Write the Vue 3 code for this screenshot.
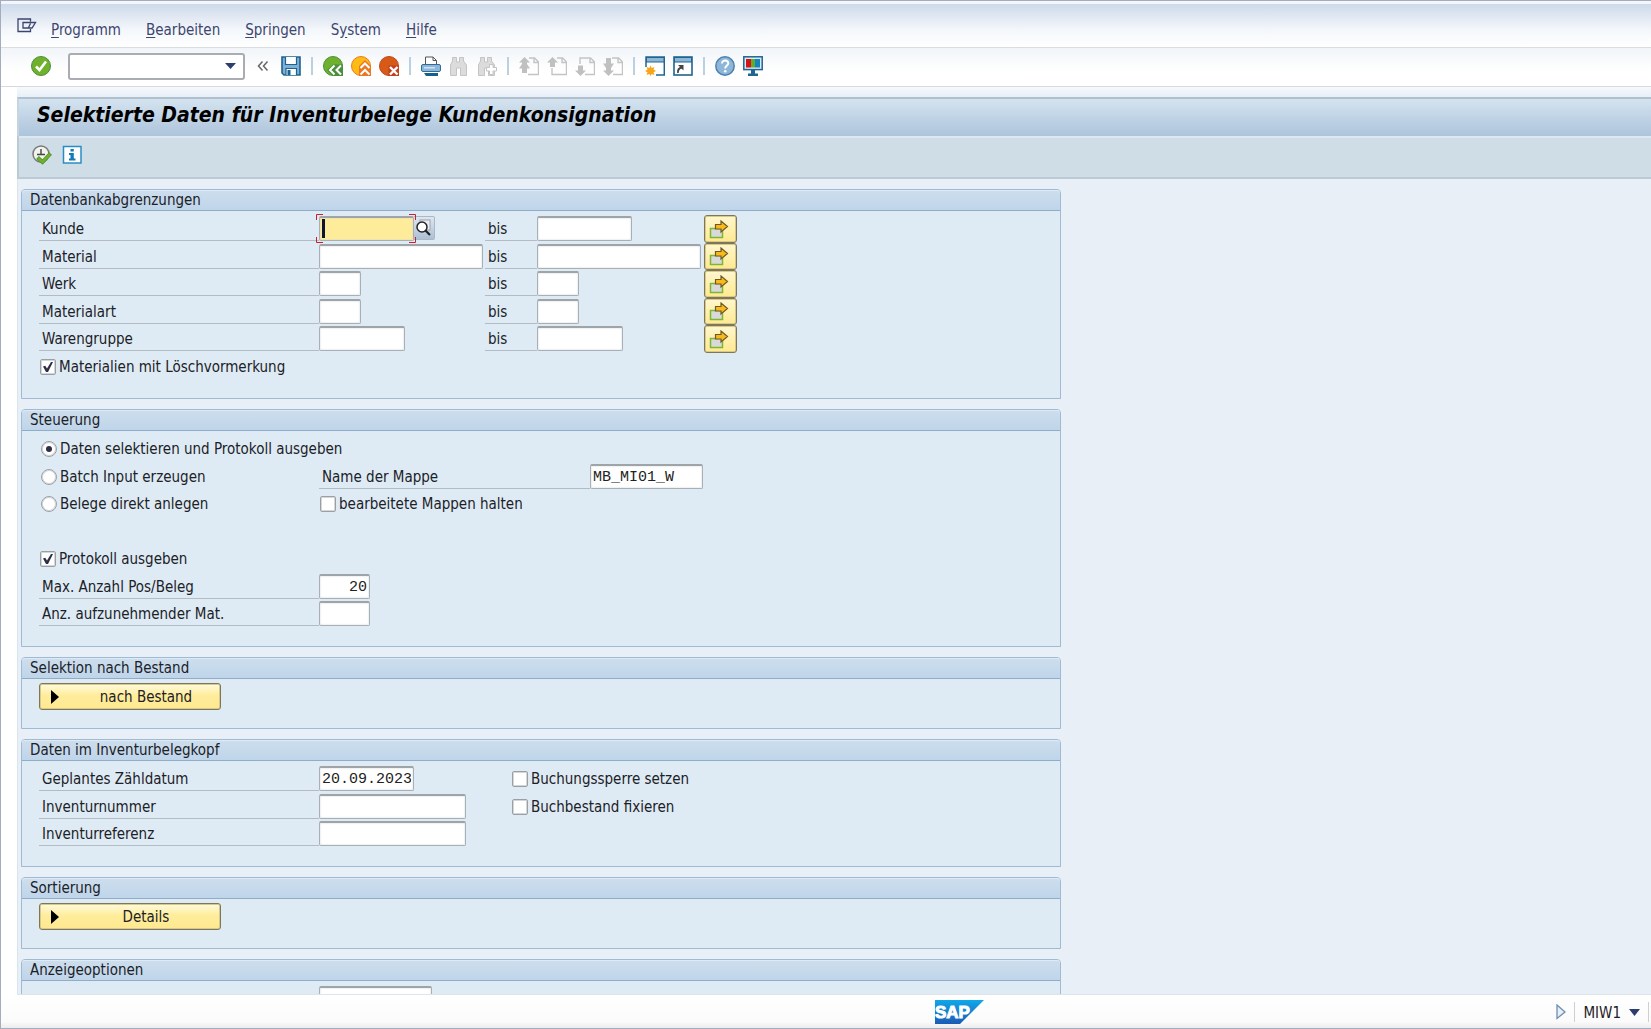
<script setup>
import { ref } from 'vue'

const menus = [
  { pre: '', key: 'P', post: 'rogramm' },
  { pre: '', key: 'B', post: 'earbeiten' },
  { pre: '', key: 'S', post: 'pringen' },
  { pre: 'S', key: 'y', post: 'stem' },
  { pre: '', key: 'H', post: 'ilfe' }
]

const ranges = [
  { id: 'kunde', label: 'Kunde', size: 'w-date', focus: true },
  { id: 'material', label: 'Material', size: 'w-material' },
  { id: 'werk', label: 'Werk', size: 'w-plant' },
  { id: 'materialart', label: 'Materialart', size: 'w-plant' },
  { id: 'warengruppe', label: 'Warengruppe', size: 'w-group' }
]

const withDeleted = ref(true)
const mode = ref('protokoll')
const sessionName = ref('MB_MI01_W')
const keepSessions = ref(false)
const printLog = ref(true)
const maxItems = ref('20')
const countItems = ref('')
const countDate = ref('20.09.2023')
const inventoryNo = ref('')
const inventoryRef = ref('')
const postingBlock = ref(false)
const freezeStock = ref(false)
</script>

<template>
  <div class="window">
    <nav class="menubar" aria-label="Menü">
      <button class="icon-btn menu-icon" aria-label="Systemmenü">
        <svg width="20" height="16" viewBox="0 0 20 16" fill="none" stroke="#3b4570" stroke-width="1.300">
          <path d="M13.500 3.500V1H1V13.500H13.500V11M6 4.500H18.500L15 10H6ZM13.500 5.500L11.500 9.500" />
        </svg>
      </button>
      <a v-for="m in menus" :key="m.key" href="#" class="menu">{{ m.pre }}<u>{{ m.key }}</u>{{ m.post }}</a>
    </nav>

    <div class="toolbar">
      <button class="icon-btn ok" aria-label="Enter">
        <svg width="20" height="20" viewBox="0 0 20 20">
          <circle cx="10" cy="10" r="9.500" fill="#6fb02c" stroke="#4b8f3e" />
          <path d="M5 10.500L8.500 14L15 5.500" fill="none" stroke="#fff" stroke-width="2.600" />
        </svg>
      </button>
      <div class="command">
        <input type="text" aria-label="Transaktionscode" />
        <svg width="11" height="6" viewBox="0 0 11 6"><path d="M0 0H11L5.500 6Z" fill="#2c3e70" /></svg>
      </div>
      <button class="icon-btn collapse" aria-label="Ausblenden">
        <svg width="12" height="10" viewBox="0 0 12 10" fill="none" stroke="#666" stroke-width="1.500">
          <path d="M5.500 .5L1.500 5L5.500 9.500M10.500 .5L6.500 5L10.500 9.500" />
        </svg>
      </button>
      <div class="tools">
        <button class="icon-btn" aria-label="Sichern">
          <svg width="20" height="20" viewBox="0 0 20 20">
            <path d="M1 1H19V19H3L1 17Z" fill="#7fafd4" stroke="#1d638f" stroke-width="1.600" />
            <path d="M4.500 1V8.500H15.500V1" fill="#fff" stroke="#1d638f" stroke-width="1.200" />
            <path d="M5 19V12.500H15.500V19" fill="#fff" stroke="#1d638f" stroke-width="1.200" />
            <rect x="6.500" y="14" width="3" height="5" fill="#1d638f" />
          </svg>
        </button>
      </div>
      <i class="sep"></i>
      <div class="tools">
        <button class="icon-btn" aria-label="Zurück">
          <svg width="20" height="20" viewBox="0 0 20 20">
            <circle cx="10" cy="10" r="9.500" fill="#6fb02c" stroke="#4b8f3e" />
            <path d="M4 14L10 8.500H20V20H10Z" fill="#4b8f3e" />
            <path d="M11.500 9.500L7 14L11.500 18.500M18 9.500L13.500 14L18 18.500" fill="none" stroke="#fff" stroke-width="2" />
          </svg>
        </button>
        <button class="icon-btn" aria-label="Beenden">
          <svg width="20" height="20" viewBox="0 0 20 20">
            <circle cx="10" cy="10" r="9.500" fill="#fdbb13" stroke="#e87a22" />
            <path d="M8 20V10L14 4L20 10V20Z" fill="#ea7722" />
            <path d="M9.500 12L14 7.500L18.500 12M9.500 18.500L14 14L18.500 18.500" fill="none" stroke="#fff" stroke-width="2" />
          </svg>
        </button>
        <button class="icon-btn" aria-label="Abbrechen">
          <svg width="20" height="20" viewBox="0 0 20 20">
            <circle cx="10" cy="10" r="9.500" fill="#d95a16" stroke="#b84a22" />
            <rect x="9.500" y="9.500" width="10.500" height="10.500" fill="#c2401c" />
            <path d="M11 11L18.500 18.500M18.500 11L11 18.500" fill="none" stroke="#fff" stroke-width="2.400" />
          </svg>
        </button>
      </div>
      <i class="sep"></i>
      <div class="tools">
        <button class="icon-btn" aria-label="Drucken">
          <svg width="20" height="20" viewBox="0 0 20 20">
            <path d="M4.500 9V1H12L15.500 4.500V9" fill="#fff" stroke="#555" />
            <path d="M12 1V4.500H15.500" fill="none" stroke="#555" />
            <rect x=".5" y="8.500" width="19" height="7" rx="1.500" fill="#8db6d8" stroke="#2f6d98" />
            <rect x="3" y="11" width="11" height="1.500" fill="#cfe4f3" />
            <path d="M3 17H17V20H5Z" fill="#155f8f" />
          </svg>
        </button>
        <button class="icon-btn" aria-label="Suchen">
          <svg width="20" height="20" viewBox="0 0 20 20" fill="#dcdcdc" stroke="#c4c4c4">
            <path d="M1.500 19.500V9L3.500 5V1.500H7.500V6H10.500V1.500H14.500V5L17.500 9V19.500H11.500V12H7.500V19.500Z" />
          </svg>
        </button>
        <button class="icon-btn" aria-label="Weitersuchen">
          <svg width="20" height="20" viewBox="0 0 20 20" fill="#dcdcdc" stroke="#c4c4c4">
            <path d="M1.500 19.500V9L3.500 5V1.500H7.500V6H10.500V1.500H14.500V5L17.500 9V19.500H11.500V12H7.500V19.500Z" />
            <path d="M12.500 8.500H16V11.500H19.500V15H16V18.500H12.500V15H9.500V11.500H12.500Z" fill="#fff" />
          </svg>
        </button>
      </div>
      <i class="sep"></i>
      <div class="tools">
        <button class="icon-btn" aria-label="Erste Seite">
          <svg width="20" height="20" viewBox="0 0 20 20" fill="none" stroke="#c4c4c4">
            <path d="M10 2H15.500L19.500 6V18.500H9M15 2V6.500H19.500" stroke-width="1.400" />
            <path d="M5.500 1L11 6.500H8V8L11 12.500H8V17H3V12.500H0L3 8V6.500H0Z" fill="#c0c0c0" stroke="none" />
          </svg>
        </button>
        <button class="icon-btn" aria-label="Vorige Seite">
          <svg width="20" height="20" viewBox="0 0 20 20" fill="none" stroke="#c4c4c4">
            <path d="M10 2H15.500L19.500 6V18.500H5V12M15 2V6.500H19.500" stroke-width="1.400" />
            <path d="M5.500 1L11 6.500H8V11H3V6.500H0Z" fill="#c0c0c0" stroke="none" />
          </svg>
        </button>
        <button class="icon-btn" aria-label="Nächste Seite">
          <svg width="20" height="20" viewBox="0 0 20 20" fill="none" stroke="#c4c4c4">
            <path d="M5 8V2H15.500L19.500 6V18.500H10M15 2V6.500H19.500" stroke-width="1.400" />
            <path d="M5.500 20L0 14.500H3V9.500H8V14.500H11Z" fill="#c0c0c0" stroke="none" />
          </svg>
        </button>
        <button class="icon-btn" aria-label="Letzte Seite">
          <svg width="20" height="20" viewBox="0 0 20 20" fill="none" stroke="#c4c4c4">
            <path d="M9 2H15.500L19.500 6V18.500H10M15 2V6.500H19.500" stroke-width="1.400" />
            <path d="M5.500 20L0 14.500H3V12L0 7.500H3V2H8V7.500H11L8 12V14.500H11Z" fill="#c0c0c0" stroke="none" />
          </svg>
        </button>
      </div>
      <i class="sep"></i>
      <div class="tools">
        <button class="icon-btn" aria-label="Neuer Modus">
          <svg width="20" height="20" viewBox="0 0 20 20">
            <path d="M1 11V1H19.300V19H11" fill="#fff" stroke="#20658f" stroke-width="1.500" />
            <rect x="1.500" y="1.500" width="17.500" height="4.500" fill="#8db6d8" stroke="#20658f" />
            <path d="M5.500 9.500L6.700 12L9.500 11L8.500 13.500L11 15L8.500 16.200L9.500 19L6.700 18L5.500 20L4.300 18L1.500 19L2.500 16.200L0 15L2.500 13.500L1.500 11L4.300 12Z" fill="#f9a51a" />
          </svg>
        </button>
        <button class="icon-btn" aria-label="Verknüpfung">
          <svg width="20" height="20" viewBox="0 0 20 20">
            <rect x="1" y="1" width="18" height="18" fill="#fff" stroke="#20658f" stroke-width="1.600" />
            <rect x="1.500" y="1.500" width="17" height="4.500" fill="#8db6d8" stroke="#20658f" />
            <path d="M5 17C4.500 13.500 6 12 9 11.500" fill="none" stroke="#444" stroke-width="1.800" />
            <path d="M5 9H10.500V14.500Z" fill="#444" />
          </svg>
        </button>
      </div>
      <i class="sep"></i>
      <div class="tools">
        <button class="icon-btn" aria-label="Hilfe">
          <svg width="20" height="20" viewBox="0 0 20 20">
            <circle cx="10" cy="10" r="9.200" fill="#8db6d8" stroke="#4c82b0" stroke-width="1.500" />
            <path d="M7 7.500C7 3.500 13.500 3.800 13.300 7.500C13.200 9.500 10.200 9.800 10.200 12.500" fill="none" stroke="#fff" stroke-width="2" />
            <circle cx="10.200" cy="15.300" r="1.300" fill="#fff" />
          </svg>
        </button>
        <button class="icon-btn" aria-label="Lokales Layout anpassen">
          <svg width="20" height="20" viewBox="0 0 20 20">
            <rect x=".8" y=".8" width="18.400" height="12.800" fill="#dcebf5" stroke="#20658f" stroke-width="1.500" />
            <rect x="3" y="3" width="5" height="8.500" fill="#d2141c" />
            <rect x="8" y="3" width="4" height="8.500" fill="#5fae2a" />
            <rect x="12" y="3" width="5" height="8.500" fill="#1682c4" />
            <path d="M8 14H12V17.500H15V20H5V17.500H8Z" fill="#20658f" />
          </svg>
        </button>
      </div>
    </div>

    <main class="screen">
      <header class="titlebar"><h1>Selektierte Daten für Inventurbelege Kundenkonsignation</h1></header>
      <div class="appbar">
        <button class="icon-btn" aria-label="Ausführen">
          <svg width="20" height="20" viewBox="0 0 20 20">
            <circle cx="9" cy="9" r="8" fill="#f2f2ee" stroke="#7a7a7a" stroke-width="1.500" />
            <path d="M9 4V10M5 9.500H13" fill="none" stroke="#444" stroke-width="1.400" />
            <path d="M5.500 12.500L10.500 17L18.500 8.500" fill="none" stroke="#4f8f2a" stroke-width="4" />
            <path d="M6 13L10.500 17L18 9" fill="none" stroke="#6fb02c" stroke-width="2.600" />
          </svg>
        </button>
        <button class="icon-btn" aria-label="Information">
          <svg width="20" height="20" viewBox="0 0 20 20">
            <rect x="1.500" y="1.500" width="17.500" height="16.500" fill="#fff" stroke="#2a8cc4" stroke-width="1.500" />
            <path d="M8.500 4H11.800V6.500H8.500ZM7 8H11.800V13.500H13.500V15.500H7V13.500H8.500V10H7Z" fill="#127ab8" />
          </svg>
        </button>
      </div>

      <form class="content" @submit.prevent>
        <section class="group">
          <h2>Datenbankabgrenzungen</h2>
          <div class="rows rows-range">
            <template v-for="r in ranges" :key="r.id">
              <label class="label" :for="r.id + '-von'">{{ r.label }}</label>
              <div class="cell">
                <div v-if="r.focus" class="focus-field">
                  <input :id="r.id + '-von'" type="text" class="field focused" :class="r.size" />
                  <i class="caret"></i>
                  <svg class="corners" width="100" height="29" viewBox="0 0 100 29" fill="none" stroke="#c8202c">
                    <path d="M.5 6V.5H7M93 .5H99.500V6M99.500 23V28.500H93M7 28.500H.5V23" />
                  </svg>
                </div>
                <input v-else :id="r.id + '-von'" type="text" class="field" :class="r.size" />
                <button v-if="r.focus" type="button" class="search-help" aria-label="Suchhilfe">
                  <svg width="17" height="18" viewBox="0 0 17 18">
                    <rect x="5" y="1" width="10" height="10" fill="#e9edf2" stroke="#9aa3af" />
                    <circle cx="7" cy="8" r="5" fill="#fff" stroke="#222" stroke-width="1.500" />
                    <path d="M10.500 11.500L15 16" stroke="#222" stroke-width="2.200" />
                  </svg>
                </button>
              </div>
              <label class="label" :for="r.id + '-bis'">bis</label>
              <div class="cell"><input :id="r.id + '-bis'" type="text" class="field" :class="r.size" /></div>
              <button type="button" class="sap-button multi" :aria-label="'Mehrfachselektion ' + r.label">
                <svg width="20" height="19" viewBox="0 0 20 19">
                  <rect x="1.500" y="8.500" width="12" height="9" fill="#d9d9d9" stroke="#7db832" stroke-width="1.500" />
                  <path d="M6.500 4.500H12V1L18.500 6.500L12 12V9H6.500Z" fill="#fbb81a" stroke="#6b5a2a" stroke-width="1.200" />
                </svg>
              </button>
            </template>
            <label class="choice wide"><input v-model="withDeleted" type="checkbox" />Materialien mit Löschvormerkung</label>
          </div>
        </section>

        <section class="group">
          <h2>Steuerung</h2>
          <div class="rows rows-control">
            <label class="choice radio wide"><input v-model="mode" type="radio" name="mode" value="protokoll" />Daten selektieren und Protokoll ausgeben</label>
            <label class="choice radio"><input v-model="mode" type="radio" name="mode" value="batch" />Batch Input erzeugen</label>
            <label class="label" for="mappe">Name der Mappe</label>
            <div class="cell"><input id="mappe" v-model="sessionName" type="text" class="field w-session" /></div>
            <label class="choice radio"><input v-model="mode" type="radio" name="mode" value="direkt" />Belege direkt anlegen</label>
            <label class="choice rest"><input v-model="keepSessions" type="checkbox" />bearbeitete Mappen halten</label>
            <div class="wide"></div>
            <label class="choice wide"><input v-model="printLog" type="checkbox" />Protokoll ausgeben</label>
            <label class="label" for="maxpos">Max. Anzahl Pos/Beleg</label>
            <div class="cell rest"><input id="maxpos" v-model="maxItems" type="text" class="field w-count" /></div>
            <label class="label" for="anzahl">Anz. aufzunehmender Mat.</label>
            <div class="cell rest"><input id="anzahl" v-model="countItems" type="text" class="field w-count" /></div>
          </div>
        </section>

        <section class="group">
          <h2>Selektion nach Bestand</h2>
          <div class="rows rows-button">
            <button type="button" class="sap-button expand">
              <svg width="8" height="14" viewBox="0 0 8 14"><path d="M0 0L8 7L0 14Z" /></svg>
              <span>nach Bestand</span>
            </button>
          </div>
        </section>

        <section class="group">
          <h2>Daten im Inventurbelegkopf</h2>
          <div class="rows rows-head">
            <label class="label" for="datum">Geplantes Zähldatum</label>
            <div class="cell"><input id="datum" v-model="countDate" type="text" class="field w-date" /></div>
            <label class="choice"><input v-model="postingBlock" type="checkbox" />Buchungssperre setzen</label>
            <label class="label" for="invnr">Inventurnummer</label>
            <div class="cell"><input id="invnr" v-model="inventoryNo" type="text" class="field w-inventory" /></div>
            <label class="choice"><input v-model="freezeStock" type="checkbox" />Buchbestand fixieren</label>
            <label class="label" for="invref">Inventurreferenz</label>
            <div class="cell"><input id="invref" v-model="inventoryRef" type="text" class="field w-inventory" /></div>
          </div>
        </section>

        <section class="group">
          <h2>Sortierung</h2>
          <div class="rows rows-button">
            <button type="button" class="sap-button expand">
              <svg width="8" height="14" viewBox="0 0 8 14"><path d="M0 0L8 7L0 14Z" /></svg>
              <span>Details</span>
            </button>
          </div>
        </section>

        <section class="group">
          <h2>Anzeigeoptionen</h2>
          <div class="rows rows-head">
            <span></span>
            <div class="cell"><input type="text" class="field w-session" aria-label="Anzeigevariante" /></div>
          </div>
        </section>
      </form>
    </main>

    <footer class="statusbar">
      <span></span>
      <svg class="logo" width="49" height="24" viewBox="0 0 49 24" role="img" aria-label="SAP">
        <defs>
          <linearGradient id="sap-blue" x1="0" y1="0" x2="0" y2="1">
            <stop offset="0" stop-color="#0fa8e8" />
            <stop offset="1" stop-color="#1b5bb5" />
          </linearGradient>
        </defs>
        <path d="M0 0H49L25 24H0Z" fill="url(#sap-blue)" />
        <text x="0" y="18" font-family="Liberation Sans, sans-serif" font-weight="700" font-size="17" fill="#fff" stroke="#fff" stroke-width="1">SAP</text>
      </svg>
      <div class="status-right">
        <button class="icon-btn" aria-label="Statusfeld einblenden">
          <svg width="10" height="16" viewBox="0 0 10 16"><path d="M1 1V14.500L9 8Z" fill="#e6eff7" stroke="#6f8fae" stroke-width="1.300" /></svg>
        </button>
        <i class="divider"></i>
        <button class="icon-btn session">
          <span>MIW1</span>
          <svg width="11" height="7" viewBox="0 0 11 7"><path d="M0 0H11L5.500 7Z" fill="#2c3e70" /></svg>
        </button>
        <i class="divider"></i>
      </div>
    </footer>
  </div>
</template>

<style>
body {
  margin: 0;
}
</style>

<style scoped>
.window,
.window * {
  box-sizing: border-box;
}

.window {
  display: flex;
  flex-direction: column;
  height: 100vh;
  overflow: hidden;
  background: #fff;
  border: solid #a3adbd;
  border-width: 1px 0 1px 1px;
  font: 15px/20px "DejaVu Sans Condensed", "DejaVu Sans", sans-serif;
  font-stretch: condensed;
  color: #1c2127;
}

.icon-btn {
  display: flex;
  flex: none;
  align-items: center;
  justify-content: center;
  padding: 0;
  border: 0;
  background: none;
  color: inherit;
  font: inherit;
}

.menubar {
  display: flex;
  flex: none;
  align-items: center;
  gap: 25px;
  height: 47px;
  padding: 8px 16px 0;
  border-top: 3px solid #f3f7fd;
  border-bottom: 1px solid #d8dde2;
  background: linear-gradient(#cedaea, #f4f7fb 60%, #fff);
}

.menu-icon {
  margin: 0 -11px 8px 0;
}

.menu {
  color: #3c4670;
  text-decoration: none;
}

.menu u {
  text-underline-offset: 2px;
}

.toolbar {
  display: flex;
  flex: none;
  align-items: center;
  height: 39px;
  padding: 0 0 2px 30px;
  border-bottom: 1px solid #d4dade;
  background: linear-gradient(#f1f5f9, #fff 60%);
}

.command {
  display: flex;
  align-items: center;
  width: 177px;
  height: 27px;
  margin: 0 12px 0 17px;
  padding-right: 7px;
  border: 2px solid #a9adb3;
  border-radius: 3px;
  background: #fff;
}

.command input {
  flex: 1;
  min-width: 0;
  border: 0;
  outline: 0;
  background: none;
  font: inherit;
}

.collapse {
  margin-right: 12px;
}

.tools {
  display: flex;
  gap: 8px;
}

.sep {
  width: 2px;
  height: 18px;
  margin: 0 10px;
  background: #bcd0e4;
}

.screen {
  display: flex;
  flex: 1;
  flex-direction: column;
  min-height: 0;
  margin: 0 0 0 16px;
  padding-top: 10px;
  background: linear-gradient(#f6f8fc, #e8eff7 10px);
}

.titlebar {
  flex: none;
  height: 39px;
  padding: 4px 0 0 18px;
  border-top: 2px solid #b1c0cf;
  border-left: 2px solid #c6d4e0;
  background: linear-gradient(#d4e3ef, #adc4dc);
}

.titlebar h1 {
  margin: 0;
  color: #000;
  font-size: 21px;
  font-style: italic;
  font-weight: 700;
  line-height: 24px;
  white-space: nowrap;
}

.appbar {
  display: flex;
  flex: none;
  gap: 10px;
  align-items: center;
  height: 43px;
  padding: 0 0 4px 13px;
  border: solid #bccad6;
  border-width: 0 0 2px 2px;
  box-shadow: inset 0 2px #dde8f1;
  background: #cfdde7;
}

.content {
  display: flex;
  flex: 1;
  flex-direction: column;
  gap: 10px;
  min-height: 0;
  overflow: hidden;
  padding: 10px 4px 0 3px;
  border-left: 1px solid #dbe4ee;
  border-bottom: 1px solid #dde4ea;
}

.group {
  flex: none;
  width: 100%;
  max-width: 1040px;
  border: 1px solid #9fbad3;
  border-radius: 4px 4px 0 0;
  background: #deebf4;
}

.group h2 {
  height: 21px;
  margin: 0;
  padding-left: 8px;
  border-bottom: 1px solid #8fadc9;
  border-radius: 3px 3px 0 0;
  box-shadow: inset 0 1px #dfeaf4;
  background: linear-gradient(#cddeed, #bfd5ea);
  font-size: 15px;
  font-weight: 400;
  line-height: 20px;
}

.rows {
  display: grid;
  grid-auto-rows: 28px 27px;
  padding: 4px 17px 18px;
}

.rows-range {
  grid-template-columns: 280px 166px 52px 167px 33px;
}

.rows-control {
  grid-template-columns: 280px 271px 1fr;
}

.rows-head {
  grid-template-columns: 280px 192px 1fr;
}

.rows-button {
  grid-auto-rows: 27px;
}

.wide {
  grid-column: 1 / -1;
}

.rest {
  grid-column: 2 / -1;
}

.label {
  height: 26px;
  padding-left: 3px;
  border-bottom: 1px solid #b3bcc2;
  line-height: 28px;
  white-space: nowrap;
}

.cell {
  display: flex;
  align-items: flex-start;
  padding-top: 1px;
}

.field {
  display: block;
  height: 25px;
  padding: 0 2px;
  border: 1px solid #a9b0b5;
  border-top: 2px solid #9fa4a8;
  border-radius: 2px;
  outline: 0;
  box-shadow: inset 0 0 2px #c9cdd0;
  background: #fff;
  color: #222;
  font: 15px/20px "Liberation Mono", monospace;
}

.w-plant {
  width: 42px;
}

.w-count {
  width: 51px;
  text-align: right;
}

.w-group {
  width: 86px;
}

.w-date {
  width: 95px;
}

.w-session {
  width: 113px;
}

.w-inventory {
  width: 147px;
}

.w-material {
  width: 164px;
}

.focus-field {
  position: relative;
}

.focused {
  background: #ffec9b;
}

.caret {
  position: absolute;
  top: 3px;
  left: 3px;
  width: 3px;
  height: 19px;
  background: #0e1530;
}

.corners {
  position: absolute;
  top: -2px;
  left: -3px;
  pointer-events: none;
}

.search-help {
  display: flex;
  align-items: center;
  width: 21px;
  height: 24px;
  padding: 0 0 0 1px;
  border: 1px solid #adb8c5;
  border-left: 0;
  border-radius: 0 2px 2px 0;
  background: linear-gradient(#dfe6ee, #adbfd6);
}

.sap-button {
  border: 1px solid #7c7759;
  border-radius: 3px;
  box-shadow: inset 0 0 0 1px #d8c98a;
  background: linear-gradient(#fff7cf, #ffe98f);
  color: #1c2127;
  font: inherit;
}

.multi {
  display: flex;
  align-items: center;
  justify-content: center;
  padding: 0 4px 0 0;
}

.expand {
  display: flex;
  align-items: center;
  width: 182px;
  padding: 0 1px 0 11px;
  background: linear-gradient(#fffbe0, #ffed9c 45%, #ffe890);
}

.expand span {
  flex: 1;
  padding-left: 14px;
  text-align: center;
}

.choice {
  display: flex;
  align-items: center;
  gap: 3px;
  height: 28px;
  padding-left: 1px;
  white-space: nowrap;
}

.radio {
  padding-left: 2px;
}

.choice input {
  display: grid;
  place-items: center;
  width: 16px;
  height: 16px;
  margin: 0;
  appearance: none;
  border: 1px solid #9ba0a5;
  border-radius: 2px;
  box-shadow: inset 0 0 0 1px #d4d7da;
  background: #fff;
}

.choice input[type="radio"] {
  border-radius: 50%;
}

.choice input[type="radio"]:checked::before {
  content: "";
  width: 6px;
  height: 6px;
  border-radius: 50%;
  background: #2d3045;
}

.choice input[type="checkbox"]:checked::before {
  content: "";
  width: 10px;
  height: 10px;
  background: #2d3045;
  clip-path: polygon(0 45%, 22% 38%, 40% 65%, 80% 0, 100% 0, 50% 100%, 30% 100%);
}

.statusbar {
  display: grid;
  flex: none;
  grid-template-columns: 934px 1fr auto;
  align-items: center;
  height: 33px;
  background: linear-gradient(#fff, #fbfbfb 80%, #ececec);
}

.status-right {
  display: flex;
  align-items: center;
  padding-right: 2px;
}

.divider {
  width: 1px;
  height: 20px;
  margin: 0 0 0 8px;
  background: #ccd0d4;
}

.session {
  gap: 8px;
  padding: 2px 0 0 8px;
}
</style>
